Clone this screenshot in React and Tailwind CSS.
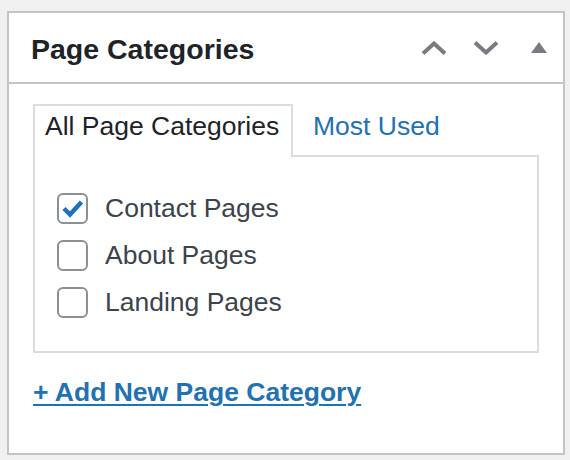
const categories = [
  { name: "Contact Pages", checked: true },
  { name: "About Pages", checked: false },
  { name: "Landing Pages", checked: false },
];

const Checkbox = ({ checked }) => {
  return (
    <div className="relative w-[31px] h-[31px] shrink-0 rounded-[6px] border-2 border-[#8c8f94] bg-white">
      {checked && (
        <svg className="absolute inset-0" width="27" height="27" viewBox="0 0 27 27">
          <polyline points="5,13.5 11,19.5 22.5,7" fill="none" stroke="#2271b1" strokeWidth="4.5" />
        </svg>
      )}
    </div>
  );
};

const App = () => {
  return (
    <div className="w-[570px] h-[460px] bg-[#f0f0f1] pt-[11px] pl-[7px] font-['Liberation_Sans',Arial,sans-serif]">
      <div className="w-[558px] bg-white border-2 border-[#c3c4c7]">
        {/* header */}
        <div className="h-[71px] flex items-center border-b-2 border-[#c3c4c7] pl-[22px] pr-[16px]">
          <h2 className="self-start pt-5 text-[28.5px] leading-[32px] font-bold text-[#1d2327]">
            Page Categories
          </h2>
          <div className="ml-auto flex items-center">
            <svg width="26" height="14" viewBox="0 0 26 14">
              <polyline points="2,12.5 13,2.5 24,12.5" fill="none" stroke="#787c82" strokeWidth="4" />
            </svg>
            <svg className="ml-[26px]" width="26" height="14" viewBox="0 0 26 14">
              <polyline points="2,1.5 13,11.5 24,1.5" fill="none" stroke="#787c82" strokeWidth="4" />
            </svg>
            <svg className="ml-[32px]" width="16" height="11" viewBox="0 0 16 11">
              <polygon points="0,11 8,0 16,11" fill="#787c82" />
            </svg>
          </div>
        </div>

        {/* body */}
        <div className="px-6 pt-5 pb-[45px]">
          <div className="flex items-start text-[26.5px] leading-[32px]">
            <div className="relative z-10 -mb-[2px] w-[260px] h-[53px] bg-white border-2 border-b-0 border-[#dcdcde] pt-[4px] pl-[10px] text-[#1d2327] whitespace-nowrap">
              All Page Categories
            </div>
            <a href="#" className="ml-[20px] pt-[6px] text-[#2271b1] whitespace-nowrap">
              Most Used
            </a>
          </div>

          <div className="border-2 border-[#dcdcde] pt-[28px] pb-[25px] pl-[22px]">
            {categories.map((cat) => (
              <label key={cat.name} className="h-[47px] flex items-center gap-[17px] text-[26.5px] text-[#3c434a]">
                <Checkbox checked={cat.checked} />
                {cat.name}
              </label>
            ))}
          </div>

          <a
            href="#"
            className="block mt-[23px] text-[26.5px] leading-[32px] font-bold text-[#2271b1] underline decoration-2 underline-offset-[3px]"
          >
            + Add New Page Category
          </a>
        </div>
      </div>
    </div>
  );
};

export default App;
